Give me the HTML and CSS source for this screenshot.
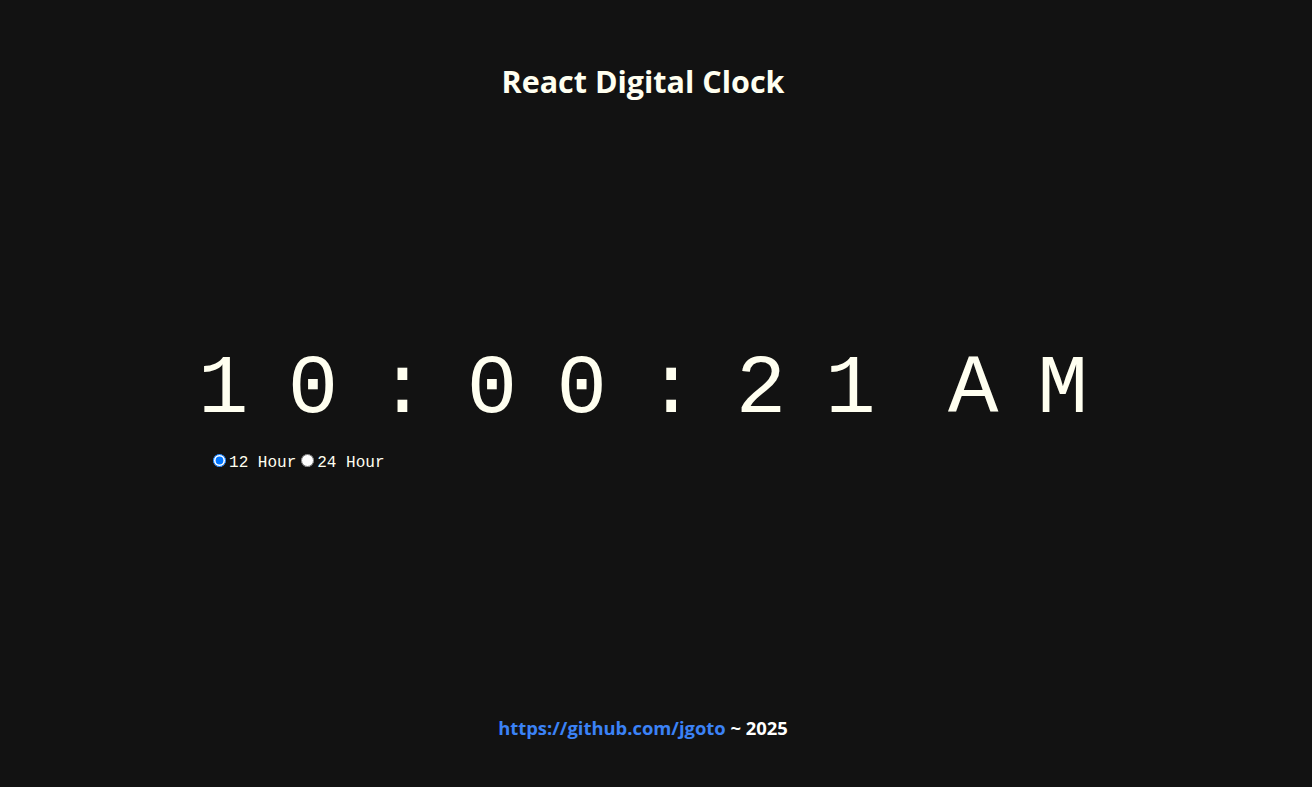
FILE: index.html
```html
<!DOCTYPE html>
<html lang="en">
<head>
<meta charset="utf-8">
<title>React Digital Clock</title>
<link rel="stylesheet" href="styles.css">
</head>
<body>
<header class="header">
  <h1 class="title">React Digital Clock</h1>
</header>
<main class="main">
  <div class="clock">
    <div class="time"><span class="digits">10:00:21</span><span class="ampm">AM</span></div>
    <div class="options"><input type="radio" id="h12" name="fmt" class="radio" checked><label for="h12" class="label">12 Hour</label><input type="radio" id="h24" name="fmt" class="radio"><label for="h24" class="label">24 Hour</label></div>
  </div>
</main>
<footer class="footer">
  <a class="link" href="#">https://github.com/jgoto</a> ~ 2025
</footer>
</body>
</html>
```

FILE: styles.css
```css
html, body {
  margin: 0;
  padding: 0;
}
body {
  background: #121212;
  color: #fffff0;
  min-height: 100vh;
  box-sizing: border-box;
  padding-right: 26px;
  display: flex;
  flex-direction: column;
  font-family: "Open Sans", "Noto Sans", sans-serif;
}
.header {
  display: flex;
  justify-content: center;
  padding-top: 63px;
}
.title {
  margin: 0;
  font-size: 30.5px;
  font-weight: 700;
  line-height: 1.2;
}
.main {
  flex: 1;
  display: flex;
  justify-content: center;
  align-items: center;
}
.clock {
  display: flex;
  flex-direction: column;
  padding-bottom: 11px;
  font-family: "Courier New", "FreeMono", "Nimbus Mono PS", "Liberation Mono", monospace;
}
.time {
  display: flex;
  font-size: 84px;
  letter-spacing: 39.2px;
  line-height: 115px;
}
.ampm {
  margin-left: 33px;
  margin-right: -39.2px;
}
.options {
  padding-top: 4px;
  padding-left: 10px;
  font-size: 16px;
  color: #fffff0;
}
.radio {
  margin: 3px 3px 0 5px;
  width: 13px;
  height: 13px;
}
.label {
  white-space: pre;
}
.footer {
  text-align: center;
  padding-bottom: 47px;
  font-size: 18.4px;
  font-weight: 700;
  color: #ffffff;
}
.link {
  color: #3b82f6;
  text-decoration: none;
}
```
